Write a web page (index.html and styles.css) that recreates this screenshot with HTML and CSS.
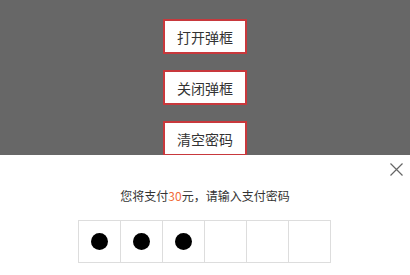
FILE: index.html
```html
<!DOCTYPE html>
<html lang="zh-CN">
<head>
    <meta charset="UTF-8">
    <meta name="viewport" content="width=device-width, initial-scale=1.0">
    <title>支付密码</title>
    <link rel="stylesheet" href="styles.css">
</head>
<body>

    <div class="actions">
        <button class="btn">打开弹框</button>
        <button class="btn">关闭弹框</button>
        <button class="btn">清空密码</button>
    </div>

    <!-- 支付密码弹框 -->
    <div class="pay-panel">
        <span class="close">
            <svg width="13" height="13" viewBox="0 0 13 13">
                <path d="M0.5 0.5L12.5 12.5M12.5 0.5L0.5 12.5" stroke="#666" stroke-width="1.2" fill="none"/>
            </svg>
        </span>
        <p class="tip">您将支付<span class="money">30</span>元，请输入支付密码</p>
        <div class="pwd-box">
            <div class="pwd-cell"><i class="dot"></i></div>
            <div class="pwd-cell"><i class="dot"></i></div>
            <div class="pwd-cell"><i class="dot"></i></div>
            <div class="pwd-cell"></div>
            <div class="pwd-cell"></div>
            <div class="pwd-cell"></div>
        </div>
    </div>

</body>
</html>
```

FILE: styles.css
```css
* {
    box-sizing: border-box;
}

body {
    margin: 0;
    height: 275px;
    background: #676767;
    font-family: "Noto Sans CJK SC", "Noto Sans", sans-serif;
    color: #333;
    overflow: hidden;
}

.actions {
    padding-top: 19px;
    display: flex;
    flex-direction: column;
    align-items: center;
    gap: 16px;
}

.btn {
    width: 84px;
    height: 35px;
    padding: 0;
    background: #fff;
    border: 2px solid #c8383c;
    font-family: inherit;
    font-size: 14px;
    color: #333;
    cursor: pointer;
}

.pay-panel {
    position: fixed;
    left: 0;
    right: 0;
    bottom: 0;
    height: 120px;
    background: #fff;
    padding-top: 31px;
}

.close {
    position: absolute;
    top: 8px;
    right: 7px;
    width: 13px;
    height: 13px;
    cursor: pointer;
}

.close svg {
    display: block;
}

.tip {
    margin: 0;
    font-size: 12px;
    line-height: 20px;
    text-align: center;
}

.money {
    color: #f26b3a;
}

.pwd-box {
    display: flex;
    justify-content: center;
    margin-top: 14px;
}

.pwd-cell {
    width: 43px;
    height: 43px;
    border: 1px solid #ddd;
    margin-left: -1px;
    display: flex;
    align-items: center;
    justify-content: center;
}

.dot {
    width: 17px;
    height: 17px;
    border-radius: 50%;
    background: #000;
}
```
